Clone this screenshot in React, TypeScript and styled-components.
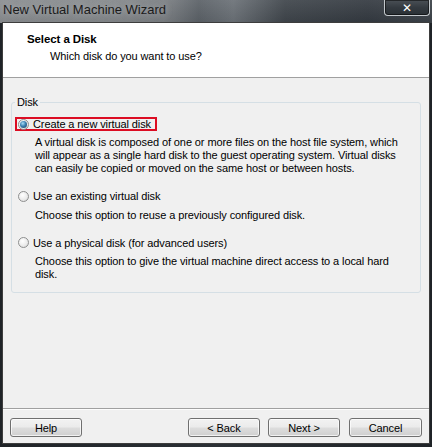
import React from "react";
import styled, { createGlobalStyle } from "styled-components";

const Global = createGlobalStyle`
  html, body { margin: 0; padding: 0; background: #25292d; }
  * { box-sizing: border-box; }
`;

const Window = styled.div`
  width: 432px;
  height: 447px;
  display: flex;
  flex-direction: column;
  background: linear-gradient(90deg, #1f2327 0%, #2b3035 50%, #1f2327 100%);
  font-family: "Liberation Sans", Arial, sans-serif;
  font-size: 11px;
  letter-spacing: -0.1px;
  color: #000;
  overflow: hidden;
`;

const TitleBar = styled.div`
  height: 23px;
  flex: none;
  display: flex;
  justify-content: space-between;
  align-items: flex-start;
  background:
    linear-gradient(180deg, rgba(255,255,255,0.08) 0%, rgba(0,0,0,0.05) 100%),
    linear-gradient(90deg, #8a8d90 0%, #85898c 25%, #7a7e82 38%, #5a6066 46%, #6a7076 54%, #3e444a 66%, #333940 85%, #3c4248 100%);
`;

const WindowCaption = styled.span`
  font-family: "Liberation Sans", Arial, sans-serif;
  font-size: 13px;
  letter-spacing: 0;
  line-height: 20px;
  padding-left: 3px;
  color: #1a1a1a;
  text-shadow: 0 0 6px rgba(200,204,208,0.6);
`;

const CloseButton = styled.div`
  width: 46px;
  height: 16px;
  margin-right: 2px;
  border: 1px solid #c3c8cc;
  border-top: none;
  border-radius: 0 0 4px 4px;
  background: linear-gradient(180deg, #4a5056 0%, #343a40 50%, #2a3035 100%);
  box-shadow: inset 0 0 0 1px rgba(0,0,0,0.5);
  display: flex;
  align-items: center;
  justify-content: center;
  color: #fff;
  font-family: "DejaVu Sans", sans-serif;
  font-weight: bold;
  font-size: 12px;
  line-height: 1;
`;

const Client = styled.div`
  flex: 1;
  margin: 0 3px 4px 3px;
  display: flex;
  flex-direction: column;
  background: #f0f0f0;
  box-shadow: 0 0 0 1px #3d3d3d;
`;

const Header = styled.div`
  height: 55px;
  flex: none;
  background: #fff;
  border-bottom: 1px solid #a0a0a0;
  padding: 9px 0 0 24px;
`;

const HeaderTitle = styled.div`
  font-weight: bold;
  font-size: 11.5px;
  line-height: 14px;
`;

const HeaderSub = styled.div`
  line-height: 14px;
  margin-top: 3px;
  padding-left: 23px;
`;

const Body = styled.div`
  flex: 1;
  padding: 17px 8px 0 8px;
`;

const GroupBox = styled.fieldset`
  margin: 0;
  padding: 8px 3px 11px 3px;
  border: 1px solid #d5dfe5;
  border-radius: 3px;
  min-width: 0;
`;

const Legend = styled.legend`
  padding: 0 2px;
  line-height: 14px;
  font-size: 11px;
`;

const OptionRow = styled.label<{ $marked?: boolean; $first?: boolean }>`
  display: inline-flex;
  align-items: center;
  height: 14px;
  margin-top: ${p => (p.$first ? "0" : "14px")};
  padding: 0 4px 0 0;
  border: 2px solid ${p => (p.$marked ? "#dc0d23" : "transparent")};
  line-height: 14px;
  white-space: nowrap;
`;

const Radio = styled.input.attrs({ type: "radio" })`
  appearance: none;
  -webkit-appearance: none;
  margin: 0 4px 0 1px;
  width: 11px;
  height: 11px;
  flex: none;
  border-radius: 50%;
  border: 1px solid #8e8f8f;
  background: radial-gradient(circle at 40% 35%, #ffffff 0%, #ececec 55%, #d2d2d2 100%);
  display: grid;
  place-items: center;
  &:checked::after {
    content: "";
    width: 7px;
    height: 7px;
    border-radius: 50%;
    background: radial-gradient(circle at 40% 35%, #a6dcf5 0%, #3a7fb0 45%, #173d5e 100%);
  }
`;

const Description = styled.div`
  margin: 5px 0 0 20px;
  line-height: 13px;
  padding-right: 6px;
`;

const Footer = styled.div`
  flex: none;
  display: flex;
  align-items: center;
  border-top: 1px solid #a0a0a0;
  box-shadow: inset 0 1px 0 #fdfdfd;
  padding: 9px 7px 6px 7px;
`;

const Spacer = styled.div`
  flex: 1;
`;

const ButtonGroup = styled.div`
  display: flex;
  gap: 8px;
`;

const Button = styled.button<{ $extra?: boolean }>`
  width: ${p => (p.$extra ? "73px" : "72px")};
  height: 19px;
  padding: 0;
  margin-left: ${p => (p.$extra ? "1px" : "0")};
  font-family: "Liberation Sans", Arial, sans-serif;
  font-size: 11px;
  letter-spacing: -0.1px;
  color: #000;
  border: 1px solid #707070;
  border-radius: 3px;
  background: linear-gradient(180deg, #f2f2f2 0%, #ebebeb 48%, #dddddd 52%, #cfcfcf 100%);
  box-shadow: inset 0 0 0 1px rgba(255,255,255,0.7);
`;

const options = [
  {
    label: "Create a new virtual disk",
    checked: true,
    desc: [
      "A virtual disk is composed of one or more files on the host file system, which",
      "will appear as a single hard disk to the guest operating system. Virtual disks",
      "can easily be copied or moved on the same host or between hosts.",
    ],
  },
  {
    label: "Use an existing virtual disk",
    checked: false,
    desc: ["Choose this option to reuse a previously configured disk."],
  },
  {
    label: "Use a physical disk (for advanced users)",
    checked: false,
    desc: [
      "Choose this option to give the virtual machine direct access to a local hard",
      "disk.",
    ],
  },
];

export default function App() {
  return (
    <>
      <Global />
      <Window>
        <TitleBar>
          <WindowCaption>New Virtual Machine Wizard</WindowCaption>
          <CloseButton>✕</CloseButton>
        </TitleBar>
        <Client>
          <Header>
            <HeaderTitle>Select a Disk</HeaderTitle>
            <HeaderSub>Which disk do you want to use?</HeaderSub>
          </Header>
          <Body>
            <GroupBox>
              <Legend>Disk</Legend>
              {options.map((o, i) => (
                <div key={o.label}>
                  <OptionRow $marked={o.checked} $first={i === 0}>
                    <Radio name="disk" defaultChecked={o.checked} />
                    {o.label}
                  </OptionRow>
                  <Description>
                    {o.desc.map(line => (
                      <div key={line}>{line}</div>
                    ))}
                  </Description>
                </div>
              ))}
            </GroupBox>
          </Body>
          <Footer>
            <Button>Help</Button>
            <Spacer />
            <ButtonGroup>
              <Button>&lt; Back</Button>
              <Button>Next &gt;</Button>
              <Button $extra>Cancel</Button>
            </ButtonGroup>
          </Footer>
        </Client>
      </Window>
    </>
  );
}
